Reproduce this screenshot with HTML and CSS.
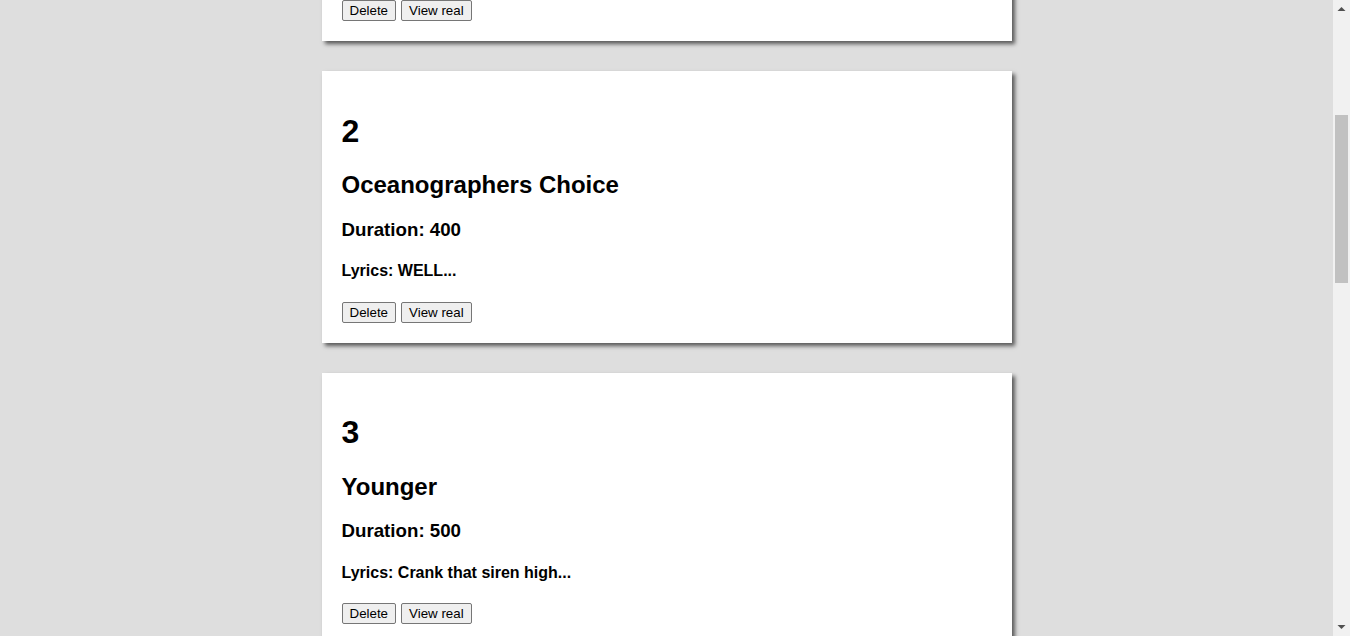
FILE: index.html
```html
<!DOCTYPE html>
<html lang="en">
<head>
<meta charset="utf-8">
<title>Songs</title>
<link rel="stylesheet" href="styles.css">
</head>
<body>
<div class="viewport">
  <main class="song-list">
    <div class="card">
      <h1>1</h1>
      <h2>Under Pressure</h2>
      <h3>Duration: 300</h3>
      <h4>Lyrics: Pressure pushing down...</h4>
      <div class="actions"><button class="btn">Delete</button><button class="btn">View real</button></div>
    </div>
    <div class="card">
      <h1>2</h1>
      <h2>Oceanographers Choice</h2>
      <h3>Duration: 400</h3>
      <h4>Lyrics: WELL...</h4>
      <div class="actions"><button class="btn">Delete</button><button class="btn">View real</button></div>
    </div>
    <div class="card">
      <h1>3</h1>
      <h2>Younger</h2>
      <h3>Duration: 500</h3>
      <h4>Lyrics: Crank that siren high...</h4>
      <div class="actions"><button class="btn">Delete</button><button class="btn">View real</button></div>
    </div>
  </main>
</div>
<div class="scrollbar">
  <div class="sb-arrow"><svg width="17" height="17" viewBox="0 0 17 17"><polygon points="4.5,11 12.5,11 8.5,7" fill="#505050"/></svg></div>
  <div class="sb-track"><div class="sb-thumb"></div></div>
  <div class="sb-arrow"><svg width="17" height="17" viewBox="0 0 17 17"><polygon points="4.5,6 12.5,6 8.5,10" fill="#505050"/></svg></div>
</div>
</body>
</html>
```
FILE: styles.css
```css
html, body {
  margin: 0;
  height: 100%;
}
body {
  display: flex;
  background: #dedede;
  font-family: "Liberation Sans", Arial, sans-serif;
  color: #000;
  overflow: hidden;
}
.viewport {
  flex: 1;
  overflow: hidden;
}
.song-list {
  margin-top: -230px;
  display: flex;
  flex-direction: column;
  gap: 30px;
  align-items: center;
}
.card {
  width: 650px;
  padding: 20px;
  background: #fff;
  box-shadow: 3px 3px 4px rgba(0, 0, 0, 0.6);
}
.card h1 {
  font-size: 32px;
  margin: 21.44px 0;
}
.card h2 {
  font-size: 24px;
  margin: 19.92px 0;
}
.card h3 {
  font-size: 18.72px;
  margin: 18.72px 0;
}
.card h4 {
  font-size: 16px;
  margin: 21.28px 0;
}
.actions {
  display: flex;
  gap: 5px;
}
.btn {
  font-family: "Liberation Sans", Arial, sans-serif;
  font-size: 13.333px;
  line-height: 19px;
  height: 21px;
  color: #000;
  background: #efefef;
  border: 1px solid #767676;
  border-radius: 2px;
  padding: 0 7px;
  margin: 0;
}
.scrollbar {
  width: 17px;
  flex: none;
  height: 100%;
  background: #f1f1f1;
  display: flex;
  flex-direction: column;
}
.sb-arrow {
  height: 17px;
  flex: none;
}
.sb-arrow svg {
  display: block;
}
.sb-track {
  flex: 1;
  padding: 0 2px;
}
.sb-thumb {
  margin-top: 98px;
  height: 168px;
  background: #c1c1c1;
}
```
